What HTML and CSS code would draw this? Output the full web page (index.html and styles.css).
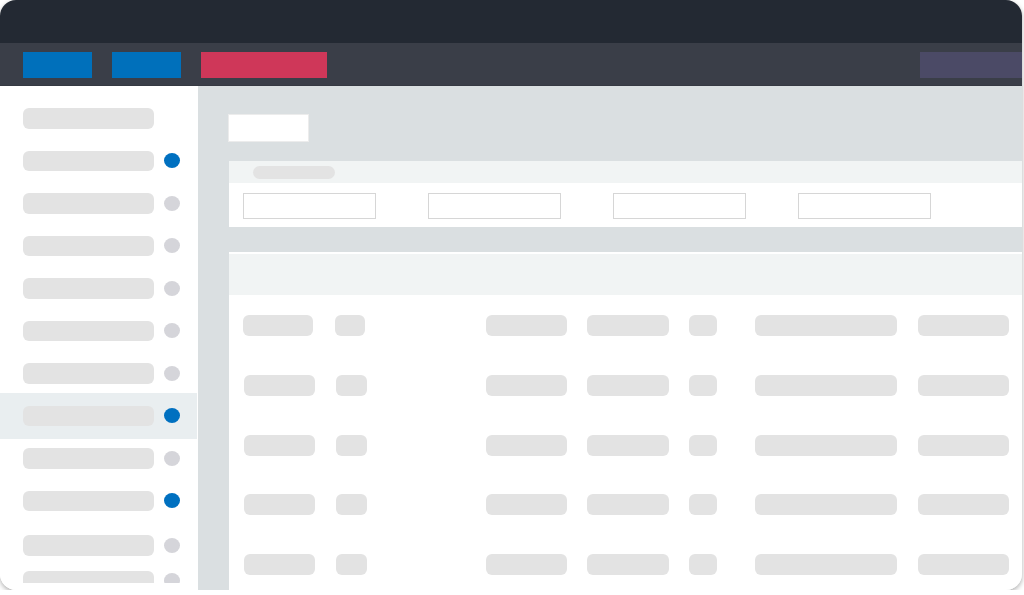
FILE: index.html
```html
<!DOCTYPE html>
<html lang="en">
<head>
<meta charset="utf-8">
<title>App skeleton</title>
<link rel="stylesheet" href="styles.css">
</head>
<body>
<div class="frame">
  <header class="titlebar"></header>
  <nav class="navbar">
    <span class="btn btn-blue"></span>
    <span class="btn btn-blue"></span>
    <span class="btn btn-red"></span>
    <span class="spacer"></span>
    <span class="btn btn-purple"></span>
  </nav>
  <div class="body">
    <aside class="sidebar">
      <ul class="menu">
        <li class="item"><span class="bar"></span></li>
        <li class="item"><span class="bar"></span><span class="dot on"></span></li>
        <li class="item"><span class="bar"></span><span class="dot"></span></li>
        <li class="item"><span class="bar"></span><span class="dot"></span></li>
        <li class="item"><span class="bar"></span><span class="dot"></span></li>
        <li class="item"><span class="bar"></span><span class="dot"></span></li>
        <li class="item"><span class="bar"></span><span class="dot"></span></li>
        <li class="item active"><span class="bar"></span><span class="dot on"></span></li>
        <li class="item"><span class="bar"></span><span class="dot"></span></li>
        <li class="item"><span class="bar"></span><span class="dot on"></span></li>
        <li class="item item-late"><span class="bar"></span><span class="dot"></span></li>
        <li class="item item-early"><span class="bar"></span><span class="dot"></span></li>
      </ul>
    </aside>
    <main class="main">
      <div class="title-box"></div>
      <section class="filters">
        <div class="filters-head"><span class="pill"></span></div>
        <div class="filters-body">
          <span class="input"></span>
          <span class="input"></span>
          <span class="input"></span>
          <span class="input"></span>
        </div>
      </section>
      <section class="table">
        <div class="table-head"></div>
        <div class="table-body">
          <div class="row first">
            <span class="cell w70"></span><span class="cell w30"></span><span class="cell w81"></span><span class="cell w82"></span><span class="cell w28"></span><span class="cell w142"></span><span class="cell w91"></span>
          </div>
          <div class="row">
            <span class="cell w71 s1"></span><span class="cell w31 s1"></span><span class="cell w81"></span><span class="cell w82"></span><span class="cell w28"></span><span class="cell w142"></span><span class="cell w91"></span>
          </div>
          <div class="row">
            <span class="cell w71 s1"></span><span class="cell w31 s1"></span><span class="cell w81"></span><span class="cell w82"></span><span class="cell w28"></span><span class="cell w142"></span><span class="cell w91"></span>
          </div>
          <div class="row">
            <span class="cell w71 s1"></span><span class="cell w31 s1"></span><span class="cell w81"></span><span class="cell w82"></span><span class="cell w28"></span><span class="cell w142"></span><span class="cell w91"></span>
          </div>
          <div class="row">
            <span class="cell w71 s1"></span><span class="cell w31 s1"></span><span class="cell w81"></span><span class="cell w82"></span><span class="cell w28"></span><span class="cell w142"></span><span class="cell w91"></span>
          </div>
        </div>
      </section>
    </main>
  </div>
</div>
</body>
</html>
```

FILE: styles.css
```css
* { box-sizing: border-box; }
html, body { margin: 0; padding: 0; background: #ffffff; font-family: "Liberation Sans", Arial, sans-serif; }

.frame {
  width: 1022px;
  height: 590px;
  border-radius: 16px;
  overflow: hidden;
  background: #ffffff;
  box-shadow: 0 2px 5px rgba(0, 0, 0, 0.32);
  display: flex;
  flex-direction: column;
}

.titlebar { height: 43px; background: #232933; flex: none; }

.navbar {
  height: 43px;
  flex: none;
  background: #3a3e48;
  border-bottom: 1px solid #353942;
  display: flex;
  align-items: flex-start;
  padding: 9px 0 0 23px;
  gap: 20px;
}
.btn { display: block; height: 26px; }
.btn-blue { width: 69px; background: #0070bb; }
.btn-red { width: 126px; background: #cf3759; }
.btn-purple { width: 104px; background: #4b4a66; margin-right: -2px; }
.spacer { flex: 1; }

.body { flex: 1; display: flex; min-height: 0; }

.sidebar {
  width: 198px;
  flex: none;
  background: #ffffff;
  padding-bottom: 7px;
  display: flex;
  flex-direction: column;
}
.menu {
  list-style: none;
  margin: 0;
  padding: 11px 0 0 0;
  flex: 1;
  overflow: hidden;
}
.item {
  display: flex;
  align-items: center;
  gap: 10px;
  padding: 11px 0 11px 23px;
  height: 42.5px;
}
.item.active {
  background: #e9eef0;
  margin: -2px 1px -2px 0;
  height: 46.5px;
}
.item-late { margin-top: 2px; }
.item-early { margin-top: -7px; }
.bar {
  display: block;
  width: 131px;
  height: 20.5px;
  border-radius: 6px;
  background: #e3e3e3;
}
.dot {
  display: block;
  width: 16px;
  height: 15px;
  border-radius: 50%;
  background: #d5d5da;
}
.dot.on { background: #0070c0; }

.main {
  flex: 1;
  background: #dadfe1;
  padding: 28px 0 0 30px;
  display: flex;
  flex-direction: column;
  min-width: 0;
}
.title-box {
  width: 81px;
  height: 28px;
  background: #ffffff;
  border: 1px solid #ececec;
  flex: none;
}

.filters {
  margin: 19px 0 0 1px;
  background: #ffffff;
  flex: none;
}
.filters-head {
  height: 22px;
  background: #f1f4f4;
  padding: 5px 0 0 24px;
}
.pill {
  display: block;
  width: 82px;
  height: 13px;
  border-radius: 7px;
  background: #e3e3e3;
}
.filters-body {
  height: 44px;
  display: flex;
  gap: 52px;
  padding: 10px 0 0 14px;
}
.input {
  display: block;
  width: 133px;
  height: 26px;
  border: 1px solid #d6d6d6;
  background: #ffffff;
}

.table {
  margin: 25px 0 0 1px;
  background: #ffffff;
  flex: 1;
  display: flex;
  flex-direction: column;
}
.table-head {
  height: 41px;
  margin-top: 2px;
  background: #f1f4f4;
  flex: none;
}
.table-body { padding: 20px 0 0 14px; }
.row {
  display: grid;
  grid-template-columns: 92px 151px 101px 102px 66px 163px 91px;
  align-items: start;
  height: 59.75px;
}
.cell {
  display: block;
  height: 21px;
  border-radius: 6px;
  background: #e3e3e3;
}
.cell.s1 { margin-left: 1px; }
.w70 { width: 70px; }
.w71 { width: 71px; }
.w30 { width: 30px; }
.w31 { width: 31px; }
.w81 { width: 81px; }
.w82 { width: 82px; }
.w28 { width: 28px; }
.w142 { width: 142px; }
.w91 { width: 91px; }
```
